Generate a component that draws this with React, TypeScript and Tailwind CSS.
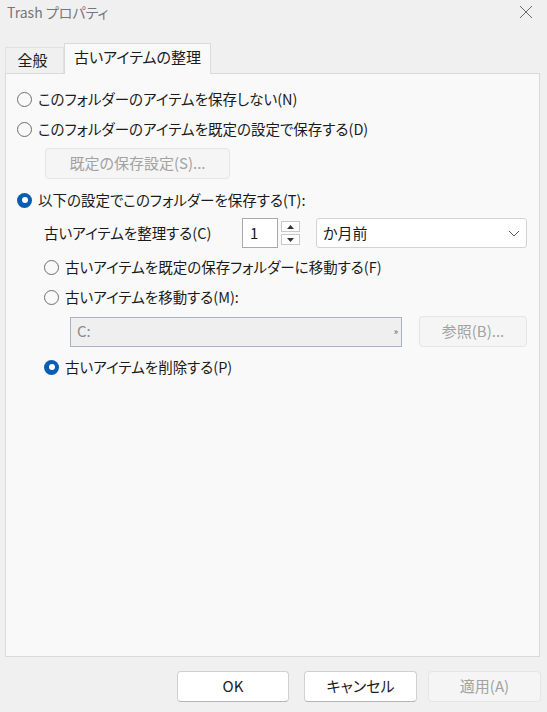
import React from "react";

const font = "font-['Noto_Sans_CJK_JP','Noto_Sans',sans-serif] [font-feature-settings:'palt']";

function Radio({ checked }: { checked?: boolean }) {
  if (checked) {
    return (
      <span className="w-[15px] h-[15px] rounded-full bg-[#0a5db3] flex items-center justify-center shrink-0">
        <span className="w-[6px] h-[6px] rounded-full bg-white" />
      </span>
    );
  }
  return <span className="w-[15px] h-[15px] rounded-full border border-[#6e6e6e] bg-[#f9f9f9] shrink-0" />;
}

function RadioRow({ checked, label, className = "" }: { checked?: boolean; label: string; className?: string }) {
  return (
    <div className={`flex items-center h-[30px] gap-[6px] ${className}`}>
      <Radio checked={checked} />
      <span className="text-[14.5px] text-[#1b1b1b] leading-none">{label}</span>
    </div>
  );
}

export default function App() {
  return (
    <div className={`w-[547px] h-[712px] bg-[#f0f0f0] flex flex-col ${font}`}>
      <div className="h-[43px] flex items-start justify-between pl-[7px] pr-[14px] pt-[3px]">
        <span className="text-[14px] text-[#777777] leading-[18px]">Trash プロパティ</span>
        <svg width="14" height="14" viewBox="0 0 14 14" className="mt-[2px]">
          <path d="M1 1L13 13M13 1L1 13" stroke="#6b6b6b" strokeWidth="1" fill="none" />
        </svg>
      </div>
      <div className="flex items-end h-[30px] pl-[5px] relative z-10">
        <div className="w-[59px] h-[26px] border border-b-0 border-[#e1e1e1] bg-[#f0f0f0] flex items-center justify-center text-[15px] text-[#1b1b1b] pr-[4px]">
          全般
        </div>
        <div className="w-[147px] h-[31px] -mb-px border border-b-0 border-[#dadada] bg-[#f9f9f9] flex items-center justify-center text-[15px] text-[#1b1b1b] pb-[3px]">
          古いアイテムの整理
        </div>
      </div>
      <div className="ml-[5px] w-[535px] h-[584px] border border-[#dadada] bg-[#f9f9f9] pt-[10px] pl-[11px] flex flex-col">
        <RadioRow label="このフォルダーのアイテムを保存しない(N)" />
        <RadioRow label="このフォルダーのアイテムを既定の設定で保存する(D)" />
        <div className="mt-[4px] ml-[28px] w-[185px] h-[31px] rounded-[4px] border border-[#e5e5e5] bg-[#f5f5f5] flex items-center justify-center text-[15px] text-[#a2a2a2]">
          既定の保存設定(S)...
        </div>
        <RadioRow checked label="以下の設定でこのフォルダーを保存する(T):" className="mt-[6px]" />
        <div className="mt-[3px] ml-[27px] flex items-center h-[30px]">
          <span className="w-[198px] text-[14.5px] text-[#1b1b1b] leading-none">古いアイテムを整理する(C)</span>
          <div className="w-[36px] h-[30px] bg-white border border-[#a9a9a9] flex items-center pl-[7px] text-[15px] text-[#1b1b1b]">1</div>
          <div className="ml-[3px] w-[19px] flex flex-col gap-[2px]">
            <div className="h-[11px] bg-white border border-[#c9c9c9] flex items-center justify-center">
              <svg width="7" height="4" viewBox="0 0 7 4"><path d="M0 4L3.5 0L7 4Z" fill="#333" /></svg>
            </div>
            <div className="h-[11px] bg-white border border-[#c9c9c9] flex items-center justify-center">
              <svg width="7" height="4" viewBox="0 0 7 4"><path d="M0 0L3.5 4L7 0Z" fill="#333" /></svg>
            </div>
          </div>
          <div className="ml-[16px] w-[211px] h-[30px] bg-white border border-[#d3d3d3] rounded-[3px] flex items-center justify-between pl-[6px] pr-[6px] text-[15px] text-[#1b1b1b]">
            <span>か月前</span>
            <svg width="12" height="7" viewBox="0 0 12 7"><path d="M1 1L6 6L11 1" stroke="#555" strokeWidth="1" fill="none" /></svg>
          </div>
        </div>
        <RadioRow label="古いアイテムを既定の保存フォルダーに移動する(F)" className="mt-[4px] ml-[27px]" />
        <RadioRow label="古いアイテムを移動する(M):" className="ml-[27px]" />
        <div className="mt-[4px] ml-[53px] flex items-center h-[31px]">
          <div className="w-[332px] h-[30px] bg-[#efefef] border border-[#a6b3c4] flex items-center justify-between pl-[6px] pr-[3px] text-[15px] text-[#8a8a8a]">
            <span>C:</span>
            <span className="text-[9px] text-[#555] leading-none">»</span>
          </div>
          <div className="ml-[17px] w-[108px] h-[31px] rounded-[4px] border border-[#e5e5e5] bg-[#f5f5f5] flex items-center justify-center text-[15px] text-[#a2a2a2]">
            参照(B)...
          </div>
        </div>
        <RadioRow checked label="古いアイテムを削除する(P)" className="mt-[5px] ml-[27px]" />
      </div>
      <div className="mt-[14px] flex items-center pl-[177px]">
        <div className="w-[112px] h-[31px] rounded-[4px] bg-white border border-[#d0d0d0] border-b-[#b5b5b5] flex items-center justify-center text-[15px] text-[#1b1b1b]">OK</div>
        <div className="ml-[15px] w-[113px] h-[31px] rounded-[4px] bg-white border border-[#d0d0d0] border-b-[#b5b5b5] flex items-center justify-center text-[15px] text-[#1b1b1b]">キャンセル</div>
        <div className="ml-[11px] w-[113px] h-[31px] rounded-[4px] bg-[#f5f5f5] border border-[#e5e5e5] flex items-center justify-center text-[15px] text-[#a2a2a2]">適用(A)</div>
      </div>
    </div>
  );
}
